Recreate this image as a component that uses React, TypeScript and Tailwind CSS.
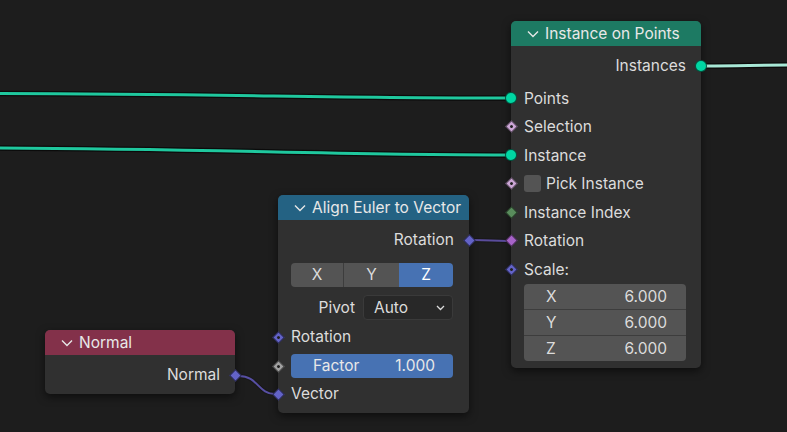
import React from 'react';

type SocketProps = {
  shape: 'circle' | 'diamond';
  color: string;
  dot?: boolean;
  side: 'left' | 'right';
};

// Node socket sitting on the node's edge
const Socket: React.FC<SocketProps> = ({ shape, color, dot, side }) => (
  <div
    className={`absolute top-1/2 -translate-y-1/2 flex items-center justify-center w-[12px] h-[12px] ${
      side === 'left' ? '-left-[6px]' : '-right-[6px]'
    }`}
  >
    {shape === 'circle' ? (
      <div className="w-[12px] h-[12px] rounded-full border border-black/60" style={{ backgroundColor: color }} />
    ) : (
      <div
        className="w-[9px] h-[9px] rotate-45 border border-black/60 flex items-center justify-center"
        style={{ backgroundColor: color }}
      >
        {dot && <div className="w-[3px] h-[3px] rounded-full bg-[#222]" />}
      </div>
    )}
  </div>
);

const Chevron = () => (
  <svg width="12" height="8" viewBox="0 0 12 8" className="shrink-0">
    <path d="M1 1.5 L6 6.5 L11 1.5" fill="none" stroke="#e6e6e6" strokeWidth="1.4" />
  </svg>
);

const Header: React.FC<{ title: string; color: string }> = ({ title, color }) => (
  <div className={`h-[25px] rounded-t-[5px] flex items-center gap-[6px] pl-[16px] ${color}`}>
    <Chevron />
    <span className="text-[#e8e8e8] text-[15.5px]">{title}</span>
  </div>
);

const Row: React.FC<{
  label: string;
  align?: 'left' | 'right';
  socket?: SocketProps;
  className?: string;
  children?: React.ReactNode;
}> = ({ label, align = 'left', socket, className = 'h-[28.5px]', children }) => (
  <div
    className={`relative flex items-center text-[15.5px] text-[#dcdcdc] ${className} ${
      align === 'right' ? 'justify-end pr-[15px]' : 'pl-[13px]'
    }`}
  >
    {children}
    <span>{label}</span>
    {socket && <Socket {...socket} />}
  </div>
);

const App: React.FC = () => {
  return (
    <div
      className="relative w-[787px] h-[432px] overflow-hidden bg-[#1d1d1d]"
      style={{ fontFamily: 'Inter, "Noto Sans", sans-serif' }}
    >
      {/* Links */}
      <svg className="absolute inset-0" width="787" height="432">
        <g fill="none" strokeLinecap="round">
          <path d="M-20 93.5 C 200 93.5, 330 98, 505 98" stroke="#0b0b0b" strokeWidth="5.5" />
          <path d="M-20 93.5 C 200 93.5, 330 98, 505 98" stroke="#1fc89e" strokeWidth="3" />
          <path d="M-20 148 C 200 148.5, 330 155, 505 155" stroke="#0b0b0b" strokeWidth="5.5" />
          <path d="M-20 148 C 200 148.5, 330 155, 505 155" stroke="#1fc89e" strokeWidth="3" />
          <path d="M706 66 C 740 66, 760 65, 800 65" stroke="#0b0b0b" strokeWidth="5.5" />
          <path d="M706 66 C 740 66, 760 65, 800 65" stroke="#a8e8d6" strokeWidth="3" />
          <path d="M473 240 C 490 240, 492 241, 507 241" stroke="#181818" strokeWidth="4" />
          <path d="M473 240 C 490 240, 492 241, 507 241" stroke="#5a4c9c" strokeWidth="2" />
          <path d="M239 376 C 258 376, 258 394, 275 394" stroke="#181818" strokeWidth="4" />
          <path d="M239 376 C 258 376, 258 394, 275 394" stroke="#574fa3" strokeWidth="2" />
        </g>
      </svg>

      {/* Instance on Points */}
      <div className="absolute left-[511px] top-[21px] w-[190px] rounded-[5px] bg-[#303030] shadow-[0_3px_8px_rgba(0,0,0,0.55)]">
        <Header title="Instance on Points" color="bg-[#1d7a63]" />
        <div className="pt-[6px] pb-[7px]">
          <Row label="Instances" align="right" className="h-[28px] mb-[4px]" socket={{ shape: 'circle', color: '#00d6a3', side: 'right' }} />
          <Row label="Points" socket={{ shape: 'circle', color: '#00d6a3', side: 'left' }} />
          <Row label="Selection" socket={{ shape: 'diamond', color: '#cca6d6', dot: true, side: 'left' }} />
          <Row label="Instance" socket={{ shape: 'circle', color: '#00d6a3', side: 'left' }} />
          <Row label="Pick Instance" socket={{ shape: 'diamond', color: '#cca6d6', dot: true, side: 'left' }}>
            <div className="w-[17px] h-[17px] rounded-[3px] bg-[#545454] mr-[5px]" />
          </Row>
          <Row label="Instance Index" socket={{ shape: 'diamond', color: '#598c5c', side: 'left' }} />
          <Row label="Rotation" socket={{ shape: 'diamond', color: '#a663c7', side: 'left' }} />
          <Row label="Scale:" socket={{ shape: 'diamond', color: '#6363c7', dot: true, side: 'left' }} />
          <div className="ml-[13px] mr-[15px] rounded-[4px] bg-[#545454] overflow-hidden text-[15.5px] text-[#dcdcdc]">
            {['X', 'Y', 'Z'].map((axis, i) => (
              <div
                key={axis}
                className={`h-[25.7px] flex items-center justify-between pl-[22px] pr-[19px] ${
                  i > 0 ? 'border-t border-[#3d3d3d]' : ''
                }`}
              >
                <span>{axis}</span>
                <span>6.000</span>
              </div>
            ))}
          </div>
        </div>
      </div>

      {/* Align Euler to Vector */}
      <div className="absolute left-[278px] top-[195px] w-[191px] rounded-[5px] bg-[#303030] shadow-[0_3px_8px_rgba(0,0,0,0.55)]">
        <Header title="Align Euler to Vector" color="bg-[#246283]" />
        <div className="pt-[6px] pb-[5px]">
          <Row label="Rotation" align="right" className="h-[28px]" socket={{ shape: 'diamond', color: '#6363c7', side: 'right' }} />
          <div className="mt-[9px] ml-[13px] mr-[16px] h-[24px] flex rounded-[4px] overflow-hidden text-[15.5px] text-[#dcdcdc]">
            <div className="w-[53px] flex items-center justify-center bg-[#545454] border-r border-[#3d3d3d]">X</div>
            <div className="w-[55px] flex items-center justify-center bg-[#545454]">Y</div>
            <div className="flex-1 flex items-center justify-center bg-[#4772b3] text-white">Z</div>
          </div>
          <div className="mt-[8px] h-[25px] flex items-center ml-[13px] mr-[16px] text-[15.5px] text-[#dcdcdc]">
            <span className="w-[72px] text-right pr-[8px]">Pivot</span>
            <div className="flex-1 h-[25px] rounded-[4px] bg-[#282828] border border-[#3a3a3a] flex items-center justify-between pl-[10px] pr-[7px]">
              <span>Auto</span>
              <svg width="9" height="6" viewBox="0 0 9 6">
                <path d="M1 1 L4.5 4.5 L8 1" fill="none" stroke="#dcdcdc" strokeWidth="1.3" />
              </svg>
            </div>
          </div>
          <Row label="Rotation" className="h-[28px] mt-[3px]" socket={{ shape: 'diamond', color: '#6363c7', dot: true, side: 'left' }} />
          <div className="relative mt-[3px] ml-[13px] mr-[16px] h-[24px] rounded-[4px] bg-[#4772b3] flex items-center justify-between pl-[22px] pr-[18px] text-[15.5px] text-[#e8e8e8]">
            <span>Factor</span>
            <span>1.000</span>
            <div className="absolute -left-[13px] top-1/2 -translate-y-1/2 w-0 h-0">
              <Socket shape="diamond" color="#a1a1a1" dot side="left" />
            </div>
          </div>
          <Row label="Vector" className="h-[28px] mt-[2px]" socket={{ shape: 'diamond', color: '#6363c7', side: 'left' }} />
        </div>
      </div>

      {/* Normal */}
      <div className="absolute left-[45px] top-[330px] w-[190px] rounded-[5px] bg-[#303030] shadow-[0_3px_8px_rgba(0,0,0,0.55)]">
        <Header title="Normal" color="bg-[#83314a]" />
        <div className="pt-[6px] pb-[5px]">
          <Row label="Normal" align="right" className="h-[28px]" socket={{ shape: 'diamond', color: '#6363c7', side: 'right' }} />
        </div>
      </div>
    </div>
  );
};

export default App;
